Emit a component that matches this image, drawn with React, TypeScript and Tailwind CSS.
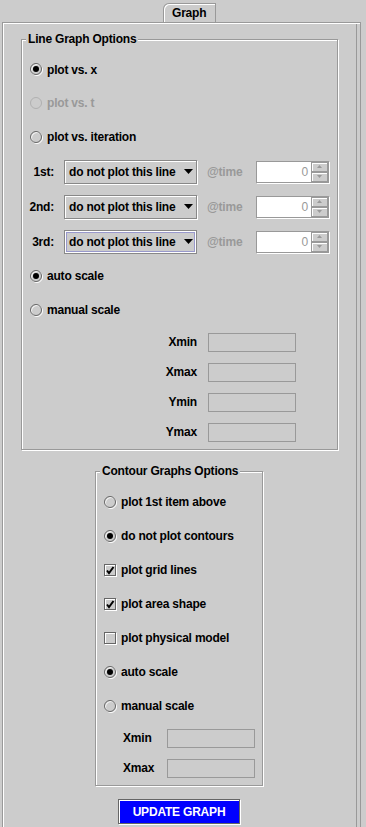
import React from 'react';

const RadioIcon = ({ checked, disabled }: { checked?: boolean; disabled?: boolean }) => (
  <svg width="13" height="13" viewBox="0 0 13 13" className="shrink-0">
    {!disabled && <circle cx="7" cy="7" r="5.5" fill="none" stroke="#ffffff" />}
    <circle cx="6" cy="6" r="5.5" fill="none" stroke={disabled ? '#b0b0b0' : '#666666'} />
    {checked && <circle cx="6" cy="6" r="3" fill="#000000" />}
  </svg>
);

const CheckIcon = ({ checked }: { checked?: boolean }) => (
  <svg width="13" height="13" viewBox="0 0 13 13" className="shrink-0">
    <rect x="1.5" y="1.5" width="11" height="11" fill="none" stroke="#ffffff" />
    <rect x="0.5" y="0.5" width="11" height="11" fill="none" stroke="#666666" />
    {checked && <path d="M3 6.5 L5 9 L9.5 3" fill="none" stroke="#000000" strokeWidth="2" />}
  </svg>
);

const Radio = ({ label, checked, disabled }: { label: string; checked?: boolean; disabled?: boolean }) => (
  <div className={`flex h-[34px] items-center gap-[4px] pl-[8px] ${disabled ? 'text-[#999999]' : 'text-black'}`}>
    <RadioIcon checked={checked} disabled={disabled} />
    <span>{label}</span>
  </div>
);

const Check = ({ label, checked }: { label: string; checked?: boolean }) => (
  <div className="flex h-[34px] items-center gap-[4px] pl-[8px]">
    <CheckIcon checked={checked} />
    <span>{label}</span>
  </div>
);

const Combo = ({ focused }: { focused?: boolean }) => (
  <div
    className={`flex h-[24px] w-[133px] items-center justify-between border border-[#888888] pl-[4px] pr-[3px] ${
      focused
        ? 'shadow-[inset_1px_1px_0_#ffffff,inset_-1px_-1px_0_#ffffff,inset_0_0_0_2px_#9999cc]'
        : 'shadow-[inset_1px_1px_0_#ffffff,1px_1px_0_#ffffff]'
    }`}
  >
    <span>do not plot this line</span>
    <svg width="9" height="5" viewBox="0 0 9 5">
      <path d="M0 0 H9 L4.5 5 Z" fill="#000000" />
    </svg>
  </div>
);

const SpinButton = ({ up }: { up?: boolean }) => (
  <div className="flex flex-1 items-center justify-center border border-[#999999] shadow-[inset_1px_1px_0_#ffffff]">
    <svg width="5" height="3" viewBox="0 0 5 3">
      <path d={up ? 'M0 3 L2.5 0 L5 3 Z' : 'M0 0 L5 0 L2.5 3 Z'} fill="#999999" />
    </svg>
  </div>
);

const Spinner = () => (
  <div className="flex h-[22px] w-[73px] border border-[#999999] shadow-[1px_1px_0_#ffffff]">
    <div className="flex flex-1 items-center justify-end bg-white pr-[3px] font-normal text-[#999999]">0</div>
    <div className="flex w-[17px] flex-col">
      <SpinButton up />
      <SpinButton />
    </div>
  </div>
);

const Field = () => <div className="h-[19px] w-[88px] border border-[#999999]" />;

const LineRow = ({ label, focused }: { label: string; focused?: boolean }) => (
  <div className="flex h-[35px] items-center">
    <span className="w-[32px] text-right">{label}</span>
    <div className="ml-[10px]">
      <Combo focused={focused} />
    </div>
    <span className="ml-[10px] w-[49px] text-[#999999]">@time</span>
    <Spinner />
  </div>
);

const RangeRow = ({ label }: { label: string }) => (
  <div className="flex h-[30px] items-center">
    <span className="w-[175px] text-right">{label}</span>
    <div className="ml-[11px]">
      <Field />
    </div>
  </div>
);

const App = () => {
  return (
    <div
      className="h-[827px] w-[366px] overflow-hidden bg-[#cccccc] text-[12px] font-bold leading-[14px] tracking-[-0.2px] text-black"
      style={{ fontFamily: '"Liberation Sans", Arial, sans-serif' }}
    >
      <div className="flex h-[22px] items-end">
        <div className="ml-[163px] flex h-[19px] w-[53px] items-center rounded-tl-[6px] border-l border-t border-r border-[#999999] pl-[8px] shadow-[inset_1px_1px_0_#ffffff]">
          Graph
        </div>
      </div>

      <div className="ml-[2px] h-[820px] w-[359px] border-l border-t border-r border-[#999999] shadow-[inset_1px_1px_0_#ffffff,inset_-3px_0_0_#cccccc,inset_-4px_0_0_#999999]">
        <fieldset className="ml-[18px] mt-[9px] w-[317px] border border-[#999999] pb-[2px] shadow-[1px_1px_0_#ffffff,inset_1px_1px_0_#ffffff]">
          <legend className="ml-[4px] bg-[#cccccc] px-[2px] leading-[14px]">Line Graph Options</legend>
          <div className="flex flex-col pt-[7px]">
            <div className="flex h-[33px] items-center">
              <Radio label="plot vs. x" checked />
            </div>
            <Radio label="plot vs. t" disabled />
            <Radio label="plot vs. iteration" />
            <LineRow label="1st:" />
            <LineRow label="2nd:" />
            <LineRow label="3rd:" focused />
            <Radio label="auto scale" checked />
            <Radio label="manual scale" />
            <RangeRow label="Xmin" />
            <RangeRow label="Xmax" />
            <RangeRow label="Ymin" />
            <RangeRow label="Ymax" />
          </div>
        </fieldset>

        <fieldset className="ml-[92px] mt-[14px] w-[168px] border border-[#999999] pb-[2px] shadow-[1px_1px_0_#ffffff,inset_1px_1px_0_#ffffff]">
          <legend className="ml-[4px] bg-[#cccccc] px-[2px] leading-[14px]">Contour Graphs Options</legend>
          <div className="flex flex-col pt-[7px]">
            <Radio label="plot 1st item above" />
            <Radio label="do not plot contours" checked />
            <Check label="plot grid lines" checked />
            <Check label="plot area shape" checked />
            <Check label="plot physical model" />
            <Radio label="auto scale" checked />
            <Radio label="manual scale" />
            {['Xmin', 'Xmax'].map((l) => (
              <div key={l} className="flex h-[30px] items-center pl-[27px]">
                <span className="w-[44px]">{l}</span>
                <Field />
              </div>
            ))}
          </div>
        </fieldset>

        <button className="ml-[115px] mt-[13px] flex h-[25px] w-[122px] items-center justify-center border border-[#666666] bg-[#0000ff] text-white shadow-[1px_1px_0_#ffffff,inset_1px_1px_0_#ffffff]">
          UPDATE GRAPH
        </button>
      </div>
    </div>
  );
};

export default App;
